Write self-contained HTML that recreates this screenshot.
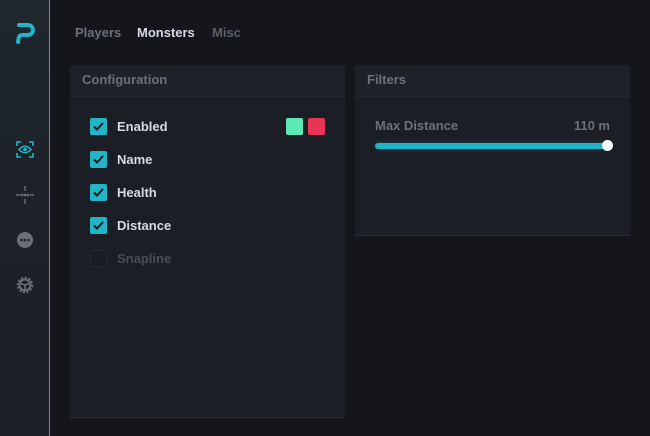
<html><head><style>
body{margin:0;width:650px;height:436px;background:#15161a;font-family:"Liberation Sans",sans-serif;position:relative;overflow:hidden}
.side{position:absolute;left:0;top:0;width:49px;height:436px;background:linear-gradient(#1f262d,#1b1e26);border-right:1px solid #2aa9bb}
.tab{position:absolute;top:25px;font-size:13px;font-weight:bold}
.panel{position:absolute;background:#1c1e26;border-radius:4px 4px 0 0;border-bottom:1px solid #2a2c35}
.ph{height:31px;border-bottom:1px solid #262830;background:#1f2129;color:#6c707c;font-size:13px;font-weight:bold;line-height:30px;padding-left:12px;border-radius:4px 4px 0 0}
.row{position:absolute;left:20px;height:17px;font-size:13px;font-weight:bold;color:#d6d9e6;line-height:17px}
.cb{position:absolute;left:0;top:0;width:17px;height:17px;border-radius:2px;background:#22b5c8}
.cb svg{position:absolute;left:3px;top:4px}
.row span{position:absolute;left:27px;white-space:nowrap}
</style></head><body>
<div class="side">
<svg style="position:absolute;left:13px;top:21px" width="24" height="24" viewBox="0 0 24 24"><path d="M6 4 H15 A5 5 0 0 1 15 14 H9 Q6 14 5.5 18 L5 21" fill="none" stroke="#22b5c8" stroke-width="4" stroke-linecap="round" stroke-linejoin="round"/></svg>
<svg style="position:absolute;left:16px;top:141px" width="18" height="17" viewBox="0 0 18 17"><g fill="none" stroke="#22b5c8" stroke-width="1.6"><path d="M1 5V1H5M13 1H17V5M17 12V16H13M5 16H1V12"/><path d="M3 8.5Q9 2 15 8.5Q9 15 3 8.5Z"/></g><circle cx="9" cy="8.5" r="1.8" fill="#22b5c8"/></svg>
<svg style="position:absolute;left:15px;top:185px" width="20" height="20" viewBox="0 0 20 20" fill="#6b6e78"><circle cx="7" cy="10" r="1.4"/><circle cx="10" cy="10" r="1.4"/><circle cx="13" cy="10" r="1.4"/><path d="M10 1v5M10 14v5M1 10h4M15 10h4" stroke="#6b6e78" stroke-width="1.4"/></svg>
<svg style="position:absolute;left:17px;top:232px" width="16" height="16"><circle cx="8" cy="8" r="8" fill="#6b6e78"/><circle cx="4.5" cy="8" r="1.3" fill="#1c2028"/><circle cx="8" cy="8" r="1.3" fill="#1c2028"/><circle cx="11.5" cy="8" r="1.3" fill="#1c2028"/></svg>
<svg style="position:absolute;left:16px;top:276px" width="18" height="18" viewBox="0 0 18 18"><circle cx="9" cy="9" r="7" fill="none" stroke="#6b6e78" stroke-width="2.4" stroke-dasharray="2.2 1.4"/><circle cx="9" cy="9" r="5.3" fill="none" stroke="#6b6e78" stroke-width="1.6"/><path d="M4.5 7.5L9 9L13.5 7.5M9 9V14" stroke="#6b6e78" stroke-width="1.5" fill="none"/></svg>
</div>
<div class="tab" style="left:75px;color:#6c707c">Players</div>
<div class="tab" style="left:137px;color:#d6d9e6">Monsters</div>
<div class="tab" style="left:212px;color:#5a5e6a">Misc</div>
<div class="panel" style="left:70px;top:65px;width:275px;height:352px">
<div class="ph">Configuration</div>
<div class="row" style="top:53px"><div class="cb"><svg width="11" height="9"><path d="M1 4.5L4 7.5L10 1" stroke="#1a1c22" stroke-width="2" fill="none"/></svg></div><span>Enabled</span></div>
<div style="position:absolute;left:216px;top:53px;width:17px;height:17px;background:#5ee8b4;border-radius:2px"></div>
<div style="position:absolute;left:238px;top:53px;width:17px;height:17px;background:#e83553;border-radius:2px"></div>
<div class="row" style="top:86px"><div class="cb"><svg width="11" height="9"><path d="M1 4.5L4 7.5L10 1" stroke="#1a1c22" stroke-width="2" fill="none"/></svg></div><span>Name</span></div>
<div class="row" style="top:119px"><div class="cb"><svg width="11" height="9"><path d="M1 4.5L4 7.5L10 1" stroke="#1a1c22" stroke-width="2" fill="none"/></svg></div><span>Health</span></div>
<div class="row" style="top:152px"><div class="cb"><svg width="11" height="9"><path d="M1 4.5L4 7.5L10 1" stroke="#1a1c22" stroke-width="2" fill="none"/></svg></div><span>Distance</span></div>
<div class="row" style="top:185px;color:#4a4d57"><div class="cb" style="background:#1a1c22;border:1px solid #262830;width:15px;height:15px"></div><span>Snapline</span></div>
</div>
<div class="panel" style="left:355px;top:65px;width:275px;height:170px">
<div class="ph">Filters</div>
<div style="position:absolute;left:20px;top:53px;font-size:13px;font-weight:bold;color:#6c707c">Max Distance</div>
<div style="position:absolute;right:20px;top:53px;font-size:13px;font-weight:bold;color:#6c707c">110 m</div>
<div style="position:absolute;left:20px;top:78px;width:233px;height:6px;border-radius:3px;background:#22b5c8;box-shadow:0 0 6px rgba(34,181,200,.25)"></div>
<div style="position:absolute;left:247px;top:75px;width:11px;height:11px;border-radius:50%;background:#fff"></div>
</div>
</body></html>
